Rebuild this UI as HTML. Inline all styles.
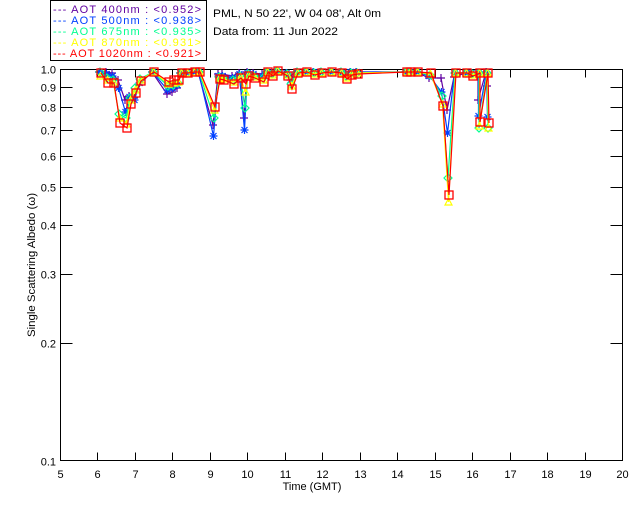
<!DOCTYPE html>
<html><head><meta charset="utf-8"><style>
html,body{margin:0;padding:0;background:#fff;width:640px;height:512px;overflow:hidden}
svg{display:block;font-family:"Liberation Sans",sans-serif}
</style></head><body>
<svg id="s" width="640" height="512" xmlns="http://www.w3.org/2000/svg">
<rect x="50.5" y="0.5" width="156" height="60" fill="none" stroke="#000" stroke-width="1"/>
<g font-size="11">
<text x="53" y="13" fill="#6000a0" textLength="148" lengthAdjust="spacing">--- AOT  400nm : &lt;0.952&gt;</text>
<text x="53" y="24" fill="#0040ff" textLength="148" lengthAdjust="spacing">--- AOT  500nm : &lt;0.938&gt;</text>
<text x="53" y="35" fill="#00ff90" textLength="148" lengthAdjust="spacing">--- AOT  675nm : &lt;0.935&gt;</text>
<text x="53" y="46" fill="#ffff00" textLength="148" lengthAdjust="spacing">--- AOT  870nm : &lt;0.931&gt;</text>
<text x="53" y="57" fill="#ff0000" textLength="148" lengthAdjust="spacing">--- AOT 1020nm : &lt;0.921&gt;</text>
<text x="213" y="17" fill="#000" textLength="168" lengthAdjust="spacingAndGlyphs">PML, N 50 22', W 04 08', Alt 0m</text>
<text x="213" y="35" fill="#000" textLength="125" lengthAdjust="spacingAndGlyphs">Data from: 11 Jun 2022</text>
<text x="312" y="490" fill="#000" text-anchor="middle">Time (GMT)</text>
<text transform="translate(35,265) rotate(-90)" fill="#000" text-anchor="middle" textLength="144" lengthAdjust="spacingAndGlyphs">Single Scattering Albedo (ω)</text>
</g>
<g id="ax" stroke="#000" stroke-width="1" fill="none"></g>
<g id="lab" font-size="11" fill="#000"></g>
<g id="data"></g>
</svg>
<script>
var NS="http://www.w3.org/2000/svg";
function el(p,t,a,txt){var e=document.createElementNS(NS,t);for(var k in a)e.setAttribute(k,a[k]);if(txt!=null)e.textContent=txt;p.appendChild(e);return e;}
var ax=document.getElementById('ax'),lab=document.getElementById('lab'),dg=document.getElementById('data');
var L=60.5,R=622.5,T=69.5,B=460.5;
el(ax,'rect',{x:L,y:T,width:R-L,height:B-T});
for(var h=5;h<=20;h++){var x=Math.round(60+(h-5)*37.47)+0.5;
 if(h>5&&h<20){el(ax,'line',{x1:x,y1:B,x2:x,y2:B-8});el(ax,'line',{x1:x,y1:T,x2:x,y2:T+8});}
 el(lab,'text',{x:x,y:478,'text-anchor':'middle'},String(h));}
var vals=[1.0,0.9,0.8,0.7,0.6,0.5,0.4,0.3,0.2,0.1];
vals.forEach(function(v){var y=Math.round(69-Math.log10(v)*392)+0.5;
 if(v<1&&v>0.1){el(ax,'line',{x1:L,y1:y,x2:L+12,y2:y});el(ax,'line',{x1:R,y1:y,x2:R-12,y2:y});}
 el(lab,'text',{x:56,y:y+4,'text-anchor':'end'},v.toFixed(1));});
var D=[[99,73,76,72,72,72],[106,83,80,78,74,72],[112,83,82,80,76,73],[118,123,118,114,88,80],[125,128,124,118,112,100],[129,104,100,98,97,96],[134,93,90,88,100,98],[139,81,80,79,83,85],[152,72,72,72,72,72],[167,82,84,86,90,94],[172,80,83,85,88,92],[177,80,82,83,85,88],[180,73,73,73,73,73],[186,73,73,73,73,73],[193,72,72,72,72,72],[198,72,72,72,72,72],[213,107,110,118,136,125],[218,79,78,77,76,74],[222,80,79,78,76,74],[232,84,82,80,78,76],[239,78,77,76,74,73],[244,84,92,108,130,118],[247,76,75,74,73,72],[253,78,77,76,74,73],[262,82,80,78,76,74],[266,72,72,72,72,72],[271,76,75,74,73,73],[276,71,71,71,71,71],[286,76,75,74,73,73],[290,89,86,84,80,76],[296,73,73,72,72,72],[305,72,72,72,72,72],[313,75,74,73,72,72],[320,73,73,72,72,72],[330,72,72,72,72,72],[340,73,73,72,72,72],[345,79,78,76,74,73],[350,75,74,73,72,72],[356,74,73,73,72,72],[405,72,72,72,72,72],[409,72,72,72,72,72],[416,72,72,72,72,72],[429,73,74,75,76,78],[441,106,104,96,92,78],[447,195,202,178,133,110],[454,73,73,73,73,77],[465,73,73,73,73,73],[471,76,75,74,73,73],[478,73,73,73,73,73],[478,122,126,128,116,100],[486,73,73,73,72,72],[487,123,128,128,117,86]];
var cols=['#ff0000','#ffff00','#00ff90','#0040ff','#6000a0'];
for(var s=4;s>=0;s--){var c=cols[s],pts=D.map(function(d){return (d[0]+(4-s)*0.5)+','+d[s+1];}).join(' ');
 el(dg,'polyline',{points:pts,fill:'none',stroke:c,'stroke-width':1.2});
 D.forEach(function(d){var x=d[0]+(4-s)*0.5,y=d[s+1];
  if(s==0)el(dg,'rect',{x:x-4,y:y-4,width:8,height:8,fill:'none',stroke:c,'stroke-width':1.3});
  else if(s==1)el(dg,'path',{d:'M'+(x-3.5)+' '+(y+3)+'L'+x+' '+(y-3.5)+'L'+(x+3.5)+' '+(y+3)+'Z',fill:'none',stroke:c,'stroke-width':1.2});
  else if(s==2)el(dg,'path',{d:'M'+x+' '+(y-4)+'L'+(x+4)+' '+y+'L'+x+' '+(y+4)+'L'+(x-4)+' '+y+'Z',fill:'none',stroke:c,'stroke-width':1.2});
  else if(s==3)el(dg,'path',{d:'M'+(x-4)+' '+y+'H'+(x+4)+'M'+x+' '+(y-4)+'V'+(y+4)+'M'+(x-3)+' '+(y-3)+'L'+(x+3)+' '+(y+3)+'M'+(x+3)+' '+(y-3)+'L'+(x-3)+' '+(y+3),stroke:c,'stroke-width':1.2});
  else el(dg,'path',{d:'M'+(x-4)+' '+y+'H'+(x+4)+'M'+x+' '+(y-4)+'V'+(y+4),stroke:c,'stroke-width':1.2});
 });}
</script>
</body></html>
